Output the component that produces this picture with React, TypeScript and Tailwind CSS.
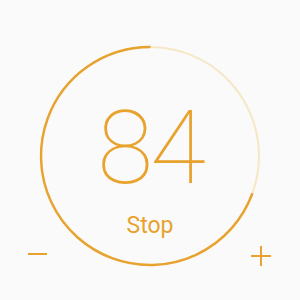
import React from "react";

export default function App() {
  const r = 109;
  const c = 2 * Math.PI * r;
  const frac = 250 / 360;
  return (
    <div className="w-[300px] h-[300px] bg-[#fafafa] flex justify-center pt-[45px]" style={{ fontFamily: "Roboto, 'Noto Sans', sans-serif" }}>
      <div className="relative w-[222px] h-[222px]">
        <svg width="222" height="222" viewBox="0 0 222 222" className="absolute inset-0">
          <circle cx="111" cy="111" r={r} fill="none" stroke="#f6e7c6" strokeWidth="2" />
          <circle
            cx="111"
            cy="111"
            r={r}
            fill="none"
            stroke="#e8a22e"
            strokeWidth="2.4"
            strokeDasharray={`${c * frac} ${c}`}
            transform="rotate(20 111 111)"
          />
        </svg>
        <div className="relative flex flex-col items-center h-full">
          <div className="mt-[52px] text-[102px] leading-[103px] font-thin text-[#e8a22e] tracking-[-3px]">84</div>
          <div className="mt-[12px] text-[23px] leading-[28px] text-[#e8a22e]">Stop</div>
        </div>
        <div className="absolute left-[-11px] top-[208px] w-[19px] h-[2px] bg-[#e8a22e]" />
        <div className="absolute left-[212px] top-[201px] w-[20px] h-[20px]">
          <div className="absolute left-0 top-[9px] w-[20px] h-[2px] bg-[#e8a22e]" />
          <div className="absolute left-[9px] top-0 w-[2px] h-[20px] bg-[#e8a22e]" />
        </div>
      </div>
    </div>
  );
}
